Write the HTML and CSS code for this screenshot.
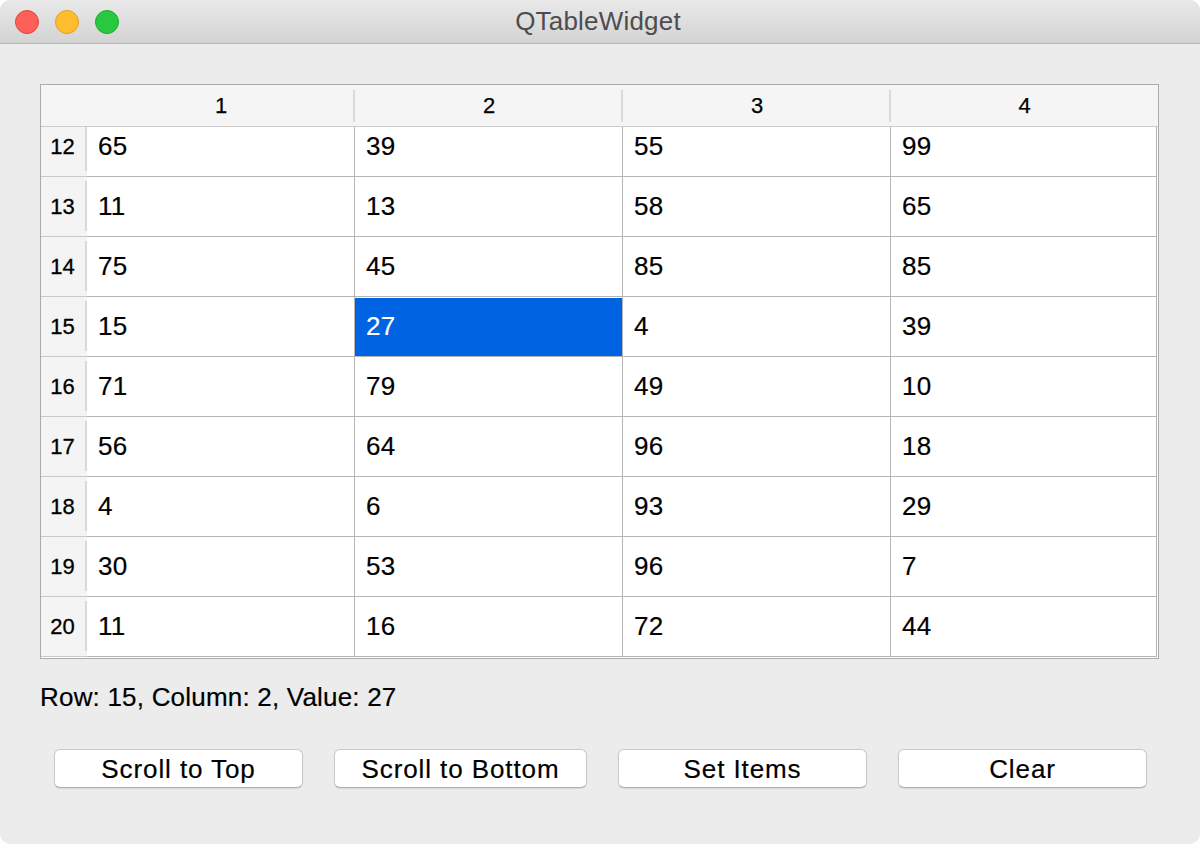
FILE: index.html
```html
<!DOCTYPE html>
<html>
<head>
<meta charset="utf-8">
<title>QTableWidget</title>
<link rel="stylesheet" href="styles.css">
</head>
<body>
<div class="window">
  <div class="titlebar">
    <div class="lights">
      <span class="light red"></span>
      <span class="light yellow"></span>
      <span class="light green"></span>
    </div>
    <div class="title">QTableWidget</div>
    <div></div>
  </div>
  <div class="content">
    <div class="table">
      <div class="thead">
        <div class="corner"></div>
        <div class="hcell sep">1</div>
        <div class="hcell sep">2</div>
        <div class="hcell sep">3</div>
        <div class="hcell">4</div>
      </div>
      <div class="tbody">
        <div class="rows">
          <div class="row"><div class="rh">12</div><div class="cell">65</div><div class="cell">39</div><div class="cell">55</div><div class="cell">99</div></div>
          <div class="row"><div class="rh">13</div><div class="cell">11</div><div class="cell">13</div><div class="cell">58</div><div class="cell">65</div></div>
          <div class="row"><div class="rh">14</div><div class="cell">75</div><div class="cell">45</div><div class="cell">85</div><div class="cell">85</div></div>
          <div class="row"><div class="rh">15</div><div class="cell">15</div><div class="cell selected">27</div><div class="cell">4</div><div class="cell">39</div></div>
          <div class="row"><div class="rh">16</div><div class="cell">71</div><div class="cell">79</div><div class="cell">49</div><div class="cell">10</div></div>
          <div class="row"><div class="rh">17</div><div class="cell">56</div><div class="cell">64</div><div class="cell">96</div><div class="cell">18</div></div>
          <div class="row"><div class="rh">18</div><div class="cell">4</div><div class="cell">6</div><div class="cell">93</div><div class="cell">29</div></div>
          <div class="row"><div class="rh">19</div><div class="cell">30</div><div class="cell">53</div><div class="cell">96</div><div class="cell">7</div></div>
          <div class="row"><div class="rh">20</div><div class="cell">11</div><div class="cell">16</div><div class="cell">72</div><div class="cell">44</div></div>
        </div>
      </div>
    </div>
    <div class="status">Row: 15, Column: 2, Value: 27</div>
    <div class="buttons">
      <button class="btn">Scroll to Top</button>
      <button class="btn">Scroll to Bottom</button>
      <button class="btn">Set Items</button>
      <button class="btn">Clear</button>
    </div>
  </div>
</div>
</body>
</html>
```
FILE: styles.css
```css
* { box-sizing: border-box; }
html, body { margin: 0; padding: 0; background: #ffffff; }
body { font-family: "Liberation Sans", Arial, sans-serif; color: #000; }

.window {
  width: 1200px;
  height: 844px;
  background: #ececec;
  border-radius: 10px;
  overflow: hidden;
}

.titlebar {
  height: 44px;
  border-bottom: 1px solid #b4b4b4;
  background: linear-gradient(#e9e9e9, #d3d3d3);
  display: grid;
  grid-template-columns: 1fr auto 1fr;
  align-items: center;
}
.lights { display: flex; gap: 16px; padding-left: 15px; }
.light {
  width: 24px; height: 24px; border-radius: 50%;
  display: block;
}
.red { background: #fe5f57; border: 1px solid #e0443e; }
.yellow { background: #febc2e; border: 1px solid #dea123; }
.green { background: #28c840; border: 1px solid #1aab29; }
.title {
  font-size: 26px;
  color: #4d4d4d;
  margin-left: -4px;
  letter-spacing: 0.2px;
}

.content { padding: 40px 41px 0 40px; }

.table {
  width: 1119px;
  border: 1px solid #ababab;
  background: #ffffff;
  padding-bottom: 1px;
}

.thead {
  display: grid;
  grid-template-columns: 46px 268px 268px 268px 267px;
  height: 42px;
  background: #f5f5f5;
  border-bottom: 1px solid #cbcbcb;
}
.hcell {
  display: flex;
  align-items: center;
  justify-content: center;
  font-size: 22px;
  -webkit-text-stroke: 0.25px #000;
}
.hcell.sep {
  background: linear-gradient(#d9d9d9, #d9d9d9) right 5px / 2px 32px no-repeat;
}

.tbody { height: 530px; overflow: hidden; }
.rows { margin-top: -10px; }
.row {
  display: grid;
  grid-template-columns: 46px 268px 268px 268px 266px;
  height: 60px;
}
.rh {
  display: flex;
  align-items: center;
  justify-content: center;
  padding-right: 3px;
  font-size: 22px;
  -webkit-text-stroke: 0.3px #000;
  background: linear-gradient(#d9d9d9, #d9d9d9) right 4px / 2px calc(100% - 9px) no-repeat, #f4f4f4;
  border-bottom: 1px solid #c9c9c9;
}
.cell {
  display: flex;
  align-items: center;
  padding-left: 11px;
  font-size: 26px;
  letter-spacing: 0.3px;
  -webkit-text-stroke: 0.2px currentColor;
  border-right: 1px solid #b5b5b5;
  border-bottom: 1px solid #b5b5b5;
}
.cell.selected {
  background: #0063e1;
  color: #ffffff;
  box-shadow: inset 0 1px 0 #ffffff;
}

.status {
  margin-top: 23px;
  font-size: 26px;
  line-height: 30px;
  letter-spacing: 0.2px;
  -webkit-text-stroke: 0.2px #000;
}

.buttons {
  margin-top: 37px;
  padding-left: 14px;
  display: grid;
  grid-template-columns: 249px 253px 249px 249px;
  gap: 31px;
}
.btn {
  height: 39px;
  font-family: "Liberation Sans", Arial, sans-serif;
  font-size: 26px;
  letter-spacing: 0.9px;
  -webkit-text-stroke: 0.2px #000;
  color: #000;
  background: #ffffff;
  border: 1px solid #c8c8c8;
  border-bottom-color: #aeaeae;
  border-radius: 6px;
  box-shadow: 0 1px 1px rgba(0, 0, 0, 0.08);
  padding: 0;
  line-height: 36px;
}
```
